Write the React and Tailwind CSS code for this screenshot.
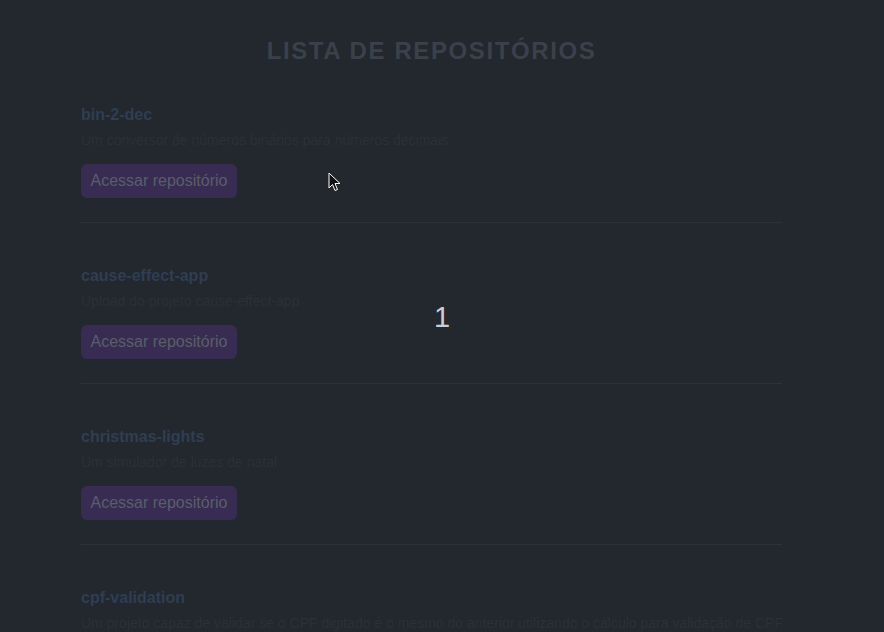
const repos = [
  { name: "bin-2-dec", desc: "Um conversor de números binários para números decimais" },
  { name: "cause-effect-app", desc: "Upload do projeto cause-effect-app" },
  { name: "christmas-lights", desc: "Um simulador de luzes de natal" },
  {
    name: "cpf-validation",
    desc: "Um projeto capaz de validar se o CPF digitado é o mesmo do anterior utilizando o cálculo para validação de CPF",
  },
];

function Cursor() {
  return (
    <svg
      className="absolute left-[328px] top-[172px]"
      width="14"
      height="21"
      viewBox="0 0 14 21"
    >
      <path
        d="M1 1 L1 16 L4.5 12.5 L7 18.5 L9.5 17.5 L7 11.5 L12 11.5 Z"
        fill="#111"
        stroke="#fff"
        strokeWidth="1"
        strokeLinejoin="round"
      />
    </svg>
  );
}

export default function App() {
  return (
    <div
      className="relative h-screen overflow-hidden bg-[#23272e]"
      style={{ fontFamily: '"Liberation Sans", Arial, sans-serif' }}
    >
      <div className="ml-[81px] w-[701px]">
        <h1 className="pt-[35px] text-center text-[24px] leading-[32px] font-bold tracking-[1.6px] text-[#3a414b]">
          LISTA DE REPOSITÓRIOS
        </h1>
        <ul>
          {repos.map((r, i) => (
            <li
              key={r.name}
              className={
                (i === 0 ? "pt-[36px] " : "pt-[41px] ") +
                "pb-[24px] border-b border-[#2d3139]"
              }
            >
              <h2 className="text-[16px] leading-[24px] font-bold text-[#2f3e53]">
                {r.name}
              </h2>
              <p className="mt-[3px] whitespace-nowrap text-[14px] leading-[20px] text-[#2c3038]">
                {r.desc}
              </p>
              <button className="mt-[14px] rounded-md bg-[#392c53] px-[9.5px] py-[5px] text-[16px] leading-[24px] text-[#5a5e68]">
                Acessar repositório
              </button>
            </li>
          ))}
        </ul>
      </div>
      <div className="absolute inset-0 flex items-center justify-center pt-[4px]">
        <span className="text-[29px] text-[#c9cdd6]">1</span>
      </div>
      <Cursor />
    </div>
  );
}
